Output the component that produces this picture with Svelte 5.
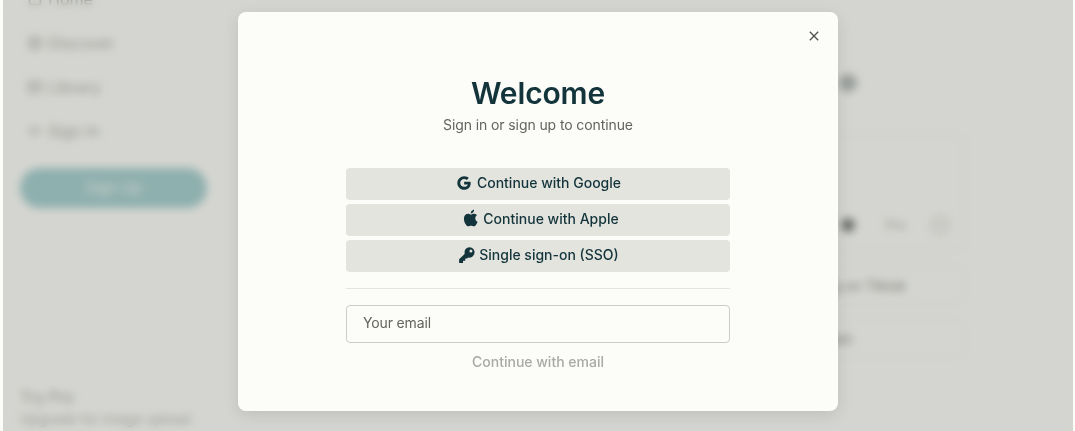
<script lang="ts">
  const navItems = [
    { label: 'Home', icon: 'M4 10l6-5 6 5v6H4z' },
    { label: 'Discover', icon: 'M3 10a7 7 0 1 0 14 0a7 7 0 1 0-14 0M3 10h14M10 3v14' },
    { label: 'Library', icon: 'M3 4h14v12H3zM3 9h14M9 4v12' },
    { label: 'Sign In', icon: 'M9 5l-5 5 5 5M4 10h8M13 5l3 5-3 5' },
  ];
</script>

<div class="page">
  <aside class="sidebar">
    <nav class="nav">
      {#each navItems as item}
        <div class="nav-item">
          <svg viewBox="0 0 20 20" width="18" height="18" fill="none" stroke="currentColor" stroke-width="1.6"><path d={item.icon} /></svg>
          <span>{item.label}</span>
        </div>
      {/each}
    </nav>
    <div class="signup">Sign Up</div>
    <div class="promo">
      <div class="promo-title">Try Pro</div>
      <div class="promo-text">Upgrade for image upload</div>
    </div>
  </aside>

  <main class="main">
    <div class="main-logo"></div>
    <div class="ask-card">
      <div class="ask-tools">
        <span class="dot"></span>
        <span class="pro">Pro</span>
        <span class="send"></span>
      </div>
    </div>
    <div class="row-card row-one"><span>Trending on Tiktok</span></div>
    <div class="row-card row-two"><span>Explain</span></div>
  </main>
</div>

<div class="overlay">
  <div class="modal">
    <button class="close" aria-label="Close">
      <svg viewBox="0 0 12 12" width="12" height="12" fill="none" stroke="currentColor" stroke-width="1.3"><path d="M1.8 1.8l8.4 8.4M10.2 1.8l-8.4 8.4" /></svg>
    </button>
    <h1>Welcome</h1>
    <p class="subtitle">Sign in or sign up to continue</p>

    <div class="providers">
      <button class="provider">
        <span class="icon google">
          <svg viewBox="0 0 24 24" width="16" height="16" fill="currentColor"><path d="M12.2 10.1v4h5.6c-.7 2.3-2.8 3.6-5.6 3.6-3.3 0-5.9-2.6-5.9-5.8s2.6-5.8 5.900-5.800c1.600 0 2.900.6 3.900 1.500l3-3C18.300 2.900 15.500 1.800 12.200 1.800 6.600 1.800 2 6.300 2 12s4.600 10.200 10.200 10.200c5.900 0 9.800-4.100 9.800-9.900 0-.8-.1-1.500-.2-2.200z" /></svg>
        </span>
        <span>Continue with Google</span>
      </button>
      <button class="provider">
        <span class="icon apple">
          <svg viewBox="0 0 24 24" width="20" height="20" fill="currentColor"><path d="M17.100 12.600c0-2.500 2-3.700 2.100-3.800-1.200-1.700-3-1.900-3.600-2-1.500-.2-3 .9-3.800.9s-2-.9-3.300-.9c-1.700 0-3.300 1-4.100 2.500-1.800 3.100-.5 7.700 1.200 10.200.9 1.200 1.900 2.600 3.200 2.500 1.300 0 1.800-.8 3.300-.8s2 .8 3.300.8c1.400 0 2.300-1.200 3.100-2.500 1-1.400 1.400-2.800 1.400-2.900-.1 0-2.800-1.100-2.800-4zM14.600 5.200c.7-.9 1.200-2 1-3.200-1 0-2.200.7-2.900 1.500-.6.700-1.200 1.900-1 3.100 1.100.1 2.200-.6 2.900-1.400z" /></svg>
        </span>
        <span>Continue with Apple</span>
      </button>
      <button class="provider">
        <span class="icon">
          <svg viewBox="0 0 24 24" width="18" height="18" fill="currentColor"><path d="M15.500 1.500a7 7 0 0 0-6.700 9L1.500 17.800V22.500h5.200v-3h3v-3h2.600l1.200-1.200a7 7 0 1 0 2-13.800zm1.700 7.300a2 2 0 1 1 0-4 2 2 0 0 1 0 4z" /></svg>
        </span>
        <span>Single sign-on (SSO)</span>
      </button>
    </div>

    <div class="divider"></div>

    <input class="email" type="text" placeholder="Your email" />
    <div class="email-submit">Continue with email</div>
  </div>
</div>

<style>
  :global(body) {
    margin: 0;
    overflow: hidden;
    background: #f4f4f2;
    font-family: Inter, "Liberation Sans", sans-serif;
  }

  .page {
    display: flex;
    width: 1075px;
    height: 431px;
    overflow: hidden;
    background: #fcfcf9;
    color: #13343b;
  }

  .sidebar {
    position: relative;
    width: 227px;
    flex-shrink: 0;
    padding: 0 20px;
    box-sizing: border-box;
  }

  .nav {
    display: flex;
    flex-direction: column;
    margin-top: -11px;
    gap: 24px;
  }

  .nav-item {
    display: flex;
    align-items: center;
    gap: 4px;
    height: 20px;
    padding-left: 6px;
    font-size: 16px;
    color: #b0b0ac;
  }

  .signup {
    margin-top: 27px;
    width: 187px;
    height: 40px;
    line-height: 40px;
    border-radius: 20px;
    background: #a8cfd0;
    color: #f4f6f2;
    font-size: 15px;
    text-align: center;
  }

  .promo {
    position: absolute;
    left: 20px;
    bottom: 4px;
    font-size: 13.8px;
    color: #b8b8b4;
  }

  .promo-title {
    font-size: 15.8px;
    margin-bottom: 4px;
    color: #a8a8a4;
  }

  .main {
    flex: 1;
    position: relative;
    padding: 135px 110px 0 40px;
    box-sizing: border-box;
  }

  .main-logo {
    position: absolute;
    left: 612px;
    top: 74px;
    width: 18px;
    height: 18px;
    border-radius: 50%;
    background: #b4b8b6;
  }

  .ask-card {
    box-sizing: border-box;
    height: 116px;
    border: 1px solid #eeeeea;
    border-radius: 8px;
    display: flex;
    align-items: flex-end;
    justify-content: flex-end;
    padding: 0 12px 13px 0;
  }

  .ask-tools {
    display: flex;
    align-items: center;
    gap: 26px;
    color: #b0b0ac;
    font-size: 13px;
  }

  .pro {
    margin: 0 -4px 0 4px;
  }

  .dot {
    width: 14px;
    height: 14px;
    border-radius: 50%;
    background: #7c807e;
  }

  .send {
    width: 24px;
    height: 24px;
    border-radius: 50%;
    background: #f0f0ec;
  }

  .row-card {
    box-sizing: border-box;
    height: 38px;
    margin-top: 15px;
    border: 1px solid #f0f0ec;
    border-radius: 8px;
    display: flex;
    align-items: center;
    justify-content: flex-end;
    font-size: 14px;
    color: #8c8c88;
  }

  .row-one { padding-right: 58px; }
  .row-two { padding-right: 111px; }

  .overlay {
    position: fixed;
    inset: 0 2px 0 3px;
    display: flex;
    justify-content: center;
    align-items: flex-start;
    padding-top: 12px;
    box-sizing: border-box;
    background: rgba(20, 26, 14, 0.17);
    backdrop-filter: blur(4.5px);
  }

  .modal {
    position: relative;
    box-sizing: border-box;
    width: 600px;
    height: 399px;
    padding: 64px 108px 0;
    border-radius: 8px;
    background: #fcfcf9;
    box-shadow: 0 4px 16px rgba(0, 0, 0, 0.1);
    display: flex;
    flex-direction: column;
    align-items: center;
  }

  .close {
    position: absolute;
    top: 17px;
    right: 17px;
    width: 14px;
    height: 14px;
    padding: 1px;
    border: none;
    background: none;
    color: #50504c;
    display: flex;
  }

  h1 {
    margin: 0;
    font-size: 30px;
    line-height: 34px;
    font-weight: 600;
    letter-spacing: -0.15px;
    color: #13343b;
  }

  .subtitle {
    margin: 5px 0 0;
    font-size: 14px;
    line-height: 20px;
    letter-spacing: -0.1px;
    color: #64645f;
  }

  .providers {
    display: flex;
    flex-direction: column;
    gap: 4px;
    width: 100%;
    margin-top: 33px;
  }

  .provider {
    box-sizing: border-box;
    height: 32px;
    border: none;
    border-radius: 4px;
    background: #e4e4df;
    color: #13343b;
    font: 500 14px Inter, "Liberation Sans", sans-serif;
    display: flex;
    align-items: center;
    justify-content: center;
    gap: 4px;
    padding: 0 0 4px 2px;
  }

  .icon {
    width: 16px;
    height: 16px;
    display: flex;
    align-items: center;
    justify-content: center;
    margin-top: 1px;
  }

  .icon svg {
    flex: none;
  }

  .icon.google svg {
    transform: translateX(-1px);
  }

  .icon.apple {
    width: 20px;
    margin-top: -1px;
  }

  .icon.apple svg {
    transform: translateX(2px);
  }

  .divider {
    width: 100%;
    height: 1px;
    margin-top: 16px;
    background: #e4e4df;
  }

  .email {
    width: 100%;
    height: 38px;
    box-sizing: border-box;
    margin-top: 16px;
    padding: 0 16px 4px;
    border: 1px solid #cdcdc8;
    border-radius: 4px;
    background: #fcfcf9;
    font: 400 14px Inter, "Liberation Sans", sans-serif;
    letter-spacing: -0.15px;
  }

  .email::placeholder {
    color: #64645f;
    opacity: 1;
  }

  .email-submit {
    margin-top: 10px;
    font-size: 14px;
    line-height: 18px;
    font-weight: 500;
    color: #a9a9a5;
  }
</style>
